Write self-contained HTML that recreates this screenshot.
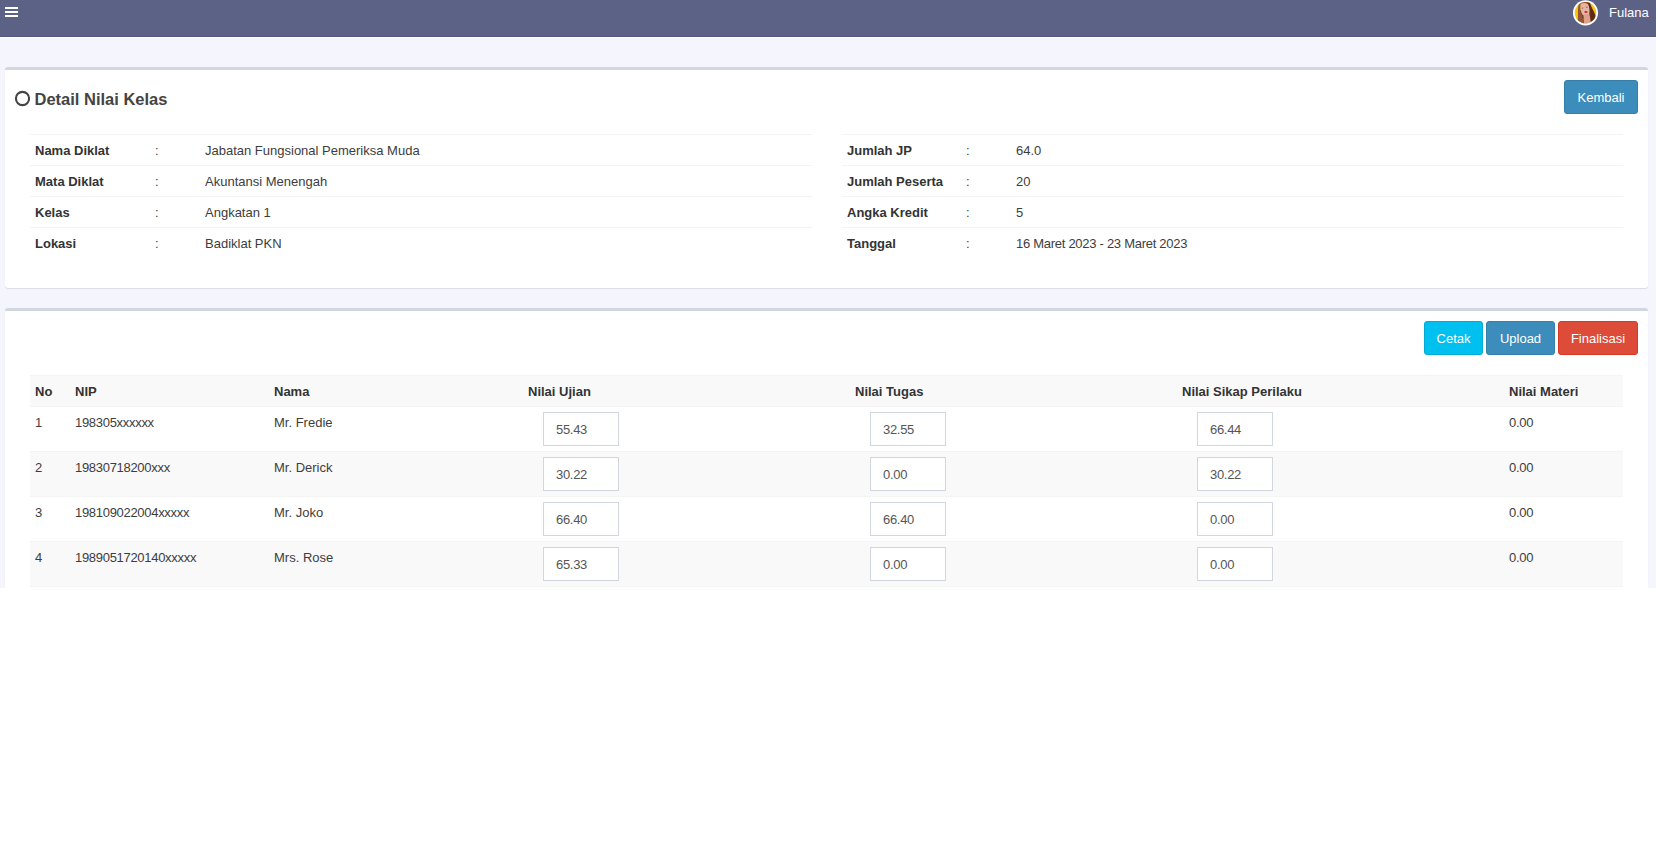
<!DOCTYPE html>
<html>
<head>
<meta charset="utf-8">
<style>
*{box-sizing:border-box;margin:0;padding:0}
html,body{width:1657px;height:863px;overflow:hidden;background:#fff}
body{position:relative;font-family:"Liberation Sans",sans-serif;font-size:13px;line-height:20px;color:#3d3d3d}
.abs{position:absolute;white-space:nowrap}
.topbar{position:absolute;left:0;top:0;width:1656px;height:36px;background:#5c6186}
.topline{position:absolute;left:0;top:36px;width:1656px;height:1px;background:#53577d}
.wrap{position:absolute;left:0;top:38px;width:1656px;height:550px;background:#f4f5fd}
.card{position:absolute;left:5px;width:1643px;background:#fff;border-top:3px solid #d2d6de;border-radius:3px;box-shadow:0 1px 1px rgba(0,0,0,0.1)}
.bars{position:absolute;left:5px;width:13px;height:2px;background:#fff}
.btn{position:absolute;height:34px;border:1px solid;border-radius:3px;color:#fff;text-align:center;line-height:32px;padding-top:1px;font-size:13px}
.hline{position:absolute;height:1px;background:#f4f4f4}
.lbl{font-weight:bold;color:#333}
.stripe{position:absolute;left:30px;width:1593px;background:#f9f9f9}
.th{font-weight:bold;color:#333}
.inp{position:absolute;width:76px;height:34px;border:1px solid #d2d6de;background:#fff;color:#555;padding-left:12px;padding-top:1px;line-height:32px;letter-spacing:-0.3px}
</style>
</head>
<body>
<div class="topbar"></div>
<div class="topline"></div>
<div class="bars" style="top:7px"></div>
<div class="bars" style="top:11px"></div>
<div class="bars" style="top:15px"></div>
<!-- avatar -->
<svg class="abs" style="left:1570px;top:0px" width="32" height="28" viewBox="0 0 32 28">
  <defs>
    <clipPath id="av"><circle cx="15.5" cy="12.8" r="10.7"/></clipPath>
    <filter id="bl" x="-20%" y="-20%" width="140%" height="140%"><feGaussianBlur stdDeviation="0.6"/></filter>
  </defs>
  <circle cx="15.5" cy="12.8" r="12.6" fill="#fff"/>
  <g clip-path="url(#av)">
    <rect x="0" y="0" width="32" height="28" fill="#f9c20c"/>
    <g filter="url(#bl)">
    <path d="M8 2 L19 0.5 C20 3 21 6 22.5 9 C24 12 26 15 26 19 C25 22 22 24 20 25 L18 17 Z" fill="#5e2c1c"/>
    <path d="M10 10 L20 10 L21 26 L10 26 Z" fill="#7a3f28"/>
    <path d="M9.5 1.5 C12 0.5 16 0.5 18.5 2 C17 2.5 13 3 10.5 5 C10 11 11 16 13.5 19 C13 22 13 24 14 26 L8 26 C7.2 21 8.2 17 8 13 C7.8 9 8.2 5 9.5 1.5 Z" fill="#94563a"/>
    <path d="M10.5 4 C12.5 2.5 16 2.6 18 4 C19.5 7 19.8 11 19 14.5 C17.5 16 14.5 16.2 12.5 14.8 C10.8 12 10.3 7.5 10.5 4 Z" fill="#e8b5a3"/>
    <path d="M13.5 14.5 L19.2 14 C20 17 20.8 20 20.5 26 L14 26 C13.8 21 13.7 17 13.5 14.5 Z" fill="#dea28c"/>
    <ellipse cx="16" cy="11.9" rx="1.7" ry="1" fill="#c0303c"/>
    <ellipse cx="12.3" cy="8.1" rx="1" ry="0.6" fill="#8b6f6e"/>
    <ellipse cx="16.8" cy="7.2" rx="1" ry="0.6" fill="#8b6f6e"/>
    </g>
  </g>
</svg>
<div class="abs" style="left:1609px;top:3px;color:#fff">Fulana</div>

<div class="wrap"></div>

<!-- card 1 -->
<div class="card" style="top:67px;height:221px"></div>
<svg class="abs" style="left:14px;top:90px" width="17" height="17" viewBox="0 0 17 17"><circle cx="8.5" cy="8.5" r="6.6" fill="none" stroke="#444" stroke-width="2.1"/></svg>
<div class="abs" style="left:34.5px;top:88px;font-size:16.5px;font-weight:bold;color:#444;line-height:22px">Detail Nilai Kelas</div>
<div class="btn" style="left:1564px;top:80px;width:74px;background:#3c8dbc;border-color:#367fa9">Kembali</div>

<div class="hline" style="left:30px;top:134px;width:782px"></div>
<div class="hline" style="left:30px;top:165px;width:782px"></div>
<div class="hline" style="left:30px;top:196px;width:782px"></div>
<div class="hline" style="left:30px;top:227px;width:782px"></div>
<div class="hline" style="left:842px;top:134px;width:781px"></div>
<div class="hline" style="left:842px;top:165px;width:781px"></div>
<div class="hline" style="left:842px;top:196px;width:781px"></div>
<div class="hline" style="left:842px;top:227px;width:781px"></div>

<div class="abs lbl" style="left:35px;top:141px">Nama Diklat</div>
<div class="abs" style="left:155px;top:141px">:</div>
<div class="abs" style="left:205px;top:141px">Jabatan Fungsional Pemeriksa Muda</div>
<div class="abs lbl" style="left:35px;top:172px">Mata Diklat</div>
<div class="abs" style="left:155px;top:172px">:</div>
<div class="abs" style="left:205px;top:172px">Akuntansi Menengah</div>
<div class="abs lbl" style="left:35px;top:203px">Kelas</div>
<div class="abs" style="left:155px;top:203px">:</div>
<div class="abs" style="left:205px;top:203px">Angkatan 1</div>
<div class="abs lbl" style="left:35px;top:234px">Lokasi</div>
<div class="abs" style="left:155px;top:234px">:</div>
<div class="abs" style="left:205px;top:234px">Badiklat PKN</div>

<div class="abs lbl" style="left:847px;top:141px">Jumlah JP</div>
<div class="abs" style="left:966px;top:141px">:</div>
<div class="abs" style="left:1016px;top:141px">64.0</div>
<div class="abs lbl" style="left:847px;top:172px">Jumlah Peserta</div>
<div class="abs" style="left:966px;top:172px">:</div>
<div class="abs" style="left:1016px;top:172px">20</div>
<div class="abs lbl" style="left:847px;top:203px">Angka Kredit</div>
<div class="abs" style="left:966px;top:203px">:</div>
<div class="abs" style="left:1016px;top:203px">5</div>
<div class="abs lbl" style="left:847px;top:234px">Tanggal</div>
<div class="abs" style="left:966px;top:234px">:</div>
<div class="abs" style="left:1016px;top:234px;letter-spacing:-0.28px">16 Maret 2023 - 23 Maret 2023</div>

<!-- card 2 -->
<div class="card" style="top:308px;height:290px"></div>
<div class="btn" style="left:1424px;top:321px;width:59px;background:#00c0ef;border-color:#00acd6">Cetak</div>
<div class="btn" style="left:1486px;top:321px;width:69px;background:#3c8dbc;border-color:#367fa9">Upload</div>
<div class="btn" style="left:1558px;top:321px;width:80px;background:#dd4b39;border-color:#d73925">Finalisasi</div>

<div class="stripe" style="top:375px;height:32px"></div>
<div class="stripe" style="top:451px;height:45px"></div>
<div class="stripe" style="top:541px;height:46px"></div>
<div class="hline" style="left:30px;top:375px;width:1593px"></div>
<div class="hline" style="left:30px;top:406px;width:1593px"></div>
<div class="hline" style="left:30px;top:451px;width:1593px"></div>
<div class="hline" style="left:30px;top:496px;width:1593px"></div>
<div class="hline" style="left:30px;top:541px;width:1593px"></div>
<div class="hline" style="left:30px;top:586px;width:1593px"></div>

<div class="abs th" style="left:35px;top:382px">No</div>
<div class="abs th" style="left:75px;top:382px">NIP</div>
<div class="abs th" style="left:274px;top:382px">Nama</div>
<div class="abs th" style="left:528px;top:382px">Nilai Ujian</div>
<div class="abs th" style="left:855px;top:382px">Nilai Tugas</div>
<div class="abs th" style="left:1182px;top:382px">Nilai Sikap Perilaku</div>
<div class="abs th" style="left:1509px;top:382px">Nilai Materi</div>

<div class="abs" style="left:35px;top:413px">1</div>
<div class="abs" style="left:75px;top:413px;letter-spacing:-0.3px">198305xxxxxx</div>
<div class="abs" style="left:274px;top:413px">Mr. Fredie</div>
<div class="inp" style="left:543px;top:412px">55.43</div>
<div class="inp" style="left:870px;top:412px">32.55</div>
<div class="inp" style="left:1197px;top:412px">66.44</div>
<div class="abs" style="left:1509px;top:413px;letter-spacing:-0.3px">0.00</div>

<div class="abs" style="left:35px;top:458px">2</div>
<div class="abs" style="left:75px;top:458px;letter-spacing:-0.3px">19830718200xxx</div>
<div class="abs" style="left:274px;top:458px">Mr. Derick</div>
<div class="inp" style="left:543px;top:457px">30.22</div>
<div class="inp" style="left:870px;top:457px">0.00</div>
<div class="inp" style="left:1197px;top:457px">30.22</div>
<div class="abs" style="left:1509px;top:458px;letter-spacing:-0.3px">0.00</div>

<div class="abs" style="left:35px;top:503px">3</div>
<div class="abs" style="left:75px;top:503px;letter-spacing:-0.3px">198109022004xxxxx</div>
<div class="abs" style="left:274px;top:503px">Mr. Joko</div>
<div class="inp" style="left:543px;top:502px">66.40</div>
<div class="inp" style="left:870px;top:502px">66.40</div>
<div class="inp" style="left:1197px;top:502px">0.00</div>
<div class="abs" style="left:1509px;top:503px;letter-spacing:-0.3px">0.00</div>

<div class="abs" style="left:35px;top:548px">4</div>
<div class="abs" style="left:75px;top:548px;letter-spacing:-0.3px">1989051720140xxxxx</div>
<div class="abs" style="left:274px;top:548px">Mrs. Rose</div>
<div class="inp" style="left:543px;top:547px">65.33</div>
<div class="inp" style="left:870px;top:547px">0.00</div>
<div class="inp" style="left:1197px;top:547px">0.00</div>
<div class="abs" style="left:1509px;top:548px;letter-spacing:-0.3px">0.00</div>

<div style="position:absolute;left:0;top:588px;width:1657px;height:275px;background:#fff"></div>
</body>
</html>
